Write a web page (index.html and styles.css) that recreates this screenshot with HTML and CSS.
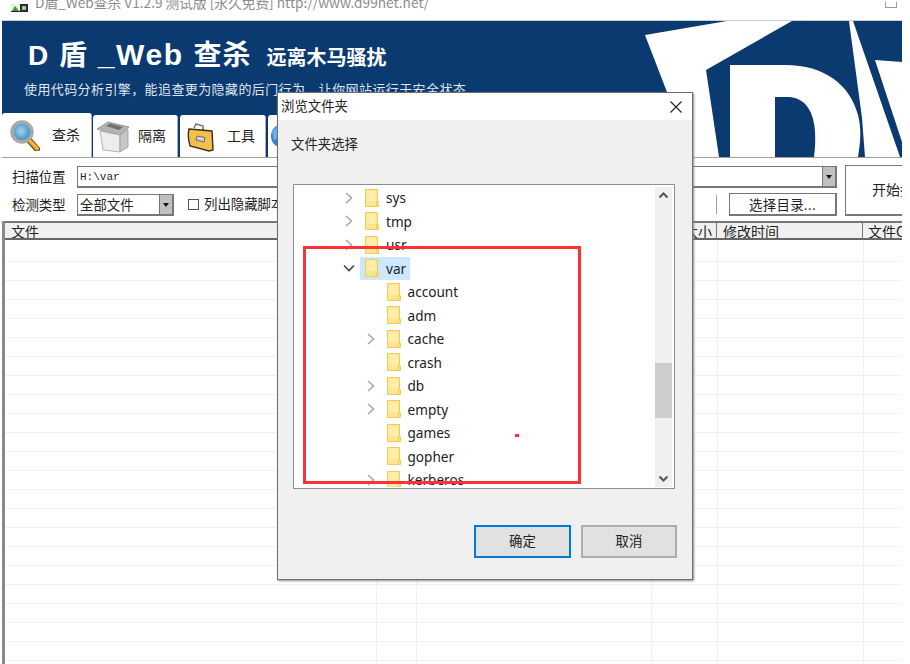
FILE: index.html
```html
<!DOCTYPE html>
<html lang="zh-CN">
<head>
<meta charset="utf-8">
<title>D盾_Web查杀</title>
<link rel="stylesheet" href="styles.css">
</head>
<body>
<svg class="defs" width="0" height="0" aria-hidden="true">
  <symbol id="folder" viewBox="0 0 14 18">
    <path d="M.5 .5H12.5V13H13.5V17.5H.5Z" fill="#fde68f" stroke="#f1cb55"/>
    <path d="M1.5 1.5H11.5V12H1.5Z" fill="#ffeda8"/>
    <path d="M11.5 17V12.5H13.2" fill="none" stroke="#f1cb55"/>
  </symbol>
  <symbol id="chev-right" viewBox="0 0 16 16">
    <path d="M5 3L10.5 8L5 13" fill="none" stroke="#a8a8a8" stroke-width="1.6"/>
  </symbol>
  <symbol id="chev-down" viewBox="0 0 16 16">
    <path d="M3 5.5L8 10.5L13 5.5" fill="none" stroke="#444" stroke-width="1.6"/>
  </symbol>
</svg>

<div class="app">
  <header class="titlebar">
    <svg class="app-icon" width="17" height="8" viewBox="0 0 17 8"><rect width="9" height="8" fill="#e8f2e0"/><path d="M1 7L4 2L8 7Z" fill="#3d9a3a"/><rect x="0" y="7" width="9" height="1" fill="#222"/><rect x="9" width="8" height="8" fill="#2a2a2a"/><rect x="11" y="2" width="4" height="4" fill="#a9c0ab"/></svg>
    <span class="title-text">D盾_Web查杀 V1.2.9 测试版 [永久免费] http://www.d99net.net/</span>
    <span class="win-max"></span>
  </header>

  <section class="banner">
    <svg class="banner-logo" width="900" height="136" viewBox="2 21 900 136">
      <path d="M645 35L727 21H792L706 70L719 157H692Z" fill="#fff"/>
      <path d="M730 65H785C825 65 850 85 858 115C862 130 860 145 858 157H730ZM775 97V157H814C816 140 816 125 811 113C806 102 798 97 788 97Z" fill="#fff" fill-rule="evenodd"/>
      <path d="M849 21H853L900 157H865L862 118Z" fill="#fff"/>
      <path d="M875 60L902 62V142Z" fill="#fff"/>
    </svg>
    <div class="brand">
      <h1 class="brand-name">D 盾 <span class="brand-web">_Web</span> 查杀</h1>
      <span class="brand-slogan">远离木马骚扰</span>
    </div>
    <p class="brand-sub">使用代码分析引擎，能追查更为隐藏的后门行为，让你网站运行于安全状态</p>
    <nav class="tabs">
      <div class="tab tab-scan active">
        <svg class="tab-icon" width="31" height="31" viewBox="0 0 31 31">
          <defs><radialGradient id="lens" cx=".45" cy=".45" r=".6"><stop offset="0" stop-color="#9fd6ee"/><stop offset="1" stop-color="#2f7fb8"/></radialGradient></defs>
          <path d="M18 19L27 29" stroke="#6b4a12" stroke-width="6" stroke-linecap="round"/>
          <path d="M19 20L27 28.5" stroke="#f0b23c" stroke-width="4" stroke-linecap="round"/>
          <circle cx="12" cy="12" r="10" fill="url(#lens)" stroke="#a9a9a9" stroke-width="3.5"/>
        </svg>
        <span>查杀</span>
      </div>
      <div class="tab tab-quarantine">
        <svg class="tab-icon" width="34" height="33" viewBox="0 0 34 33">
          <path d="M1 9L12 2L33 7L24 15Z" fill="#b4b4b4" stroke="#8c8c8c" stroke-width=".8"/>
          <path d="M10 6L14 3.5L27 7L23 10Z" fill="#6f6f6f"/>
          <path d="M4 11L24 15V32L7 30Z" fill="#ededed" stroke="#a5a5a5" stroke-width=".8"/>
          <path d="M24 15L32 9.5V27L24 32Z" fill="#c6c6c6" stroke="#9a9a9a" stroke-width=".8"/>
        </svg>
        <span>隔离</span>
      </div>
      <div class="tab tab-tools">
        <svg class="tab-icon" width="27" height="29" viewBox="0 0 27 29">
          <path d="M7 5L9 1L16 3L16 7" fill="none" stroke="#777" stroke-width="1.6"/>
          <path d="M2 6L25 8L26 27L22 28L3 23C1 16 1 10 2 6Z" fill="#f4bf4e" stroke="#3f3110" stroke-width="1.4"/>
          <path d="M10 13L18 14.5L17 19L9 17Z" fill="#d6d6d6" stroke="#6a6a6a"/>
        </svg>
        <span>工具</span>
      </div>
      <div class="tab tab-web">
        <svg class="tab-icon" width="26" height="26" viewBox="0 0 26 26">
          <circle cx="13" cy="13" r="12" fill="#2f7fd0"/>
          <path d="M2 8L8 3L10 12L4 18Z" fill="#6fb0ea"/>
        </svg>
        <span>WebShell</span>
      </div>
    </nav>
  </section>

  <form class="scan-form">
    <label class="field-label">扫描位置</label>
    <div class="combo combo-path">
      <span class="combo-value mono">H:\var</span>
      <span class="combo-btn"></span>
    </div>
    <button type="button" class="btn-start">开始扫描</button>
    <label class="field-label">检测类型</label>
    <div class="options">
      <div class="combo combo-type">
        <span class="combo-value">全部文件</span>
        <span class="combo-btn"></span>
      </div>
      <span class="check"></span>
      <span class="check-label">列出隐藏脚本</span>
      <span class="divider"></span>
      <button type="button" class="btn-dir">选择目录...</button>
    </div>
  </form>

  <section class="results">
    <div class="results-head">
      <div class="hcell col-file">文件</div>
      <div class="hcell col-level">级别</div>
      <div class="hcell col-note">说明</div>
      <div class="hcell col-size">文件大小</div>
      <div class="hcell col-time">修改时间</div>
      <div class="hcell col-crc">文件CRC</div>
    </div>
    <div class="results-body">
      <div class="row first"></div><div class="row"></div><div class="row"></div><div class="row"></div><div class="row"></div>
      <div class="row"></div><div class="row"></div><div class="row"></div><div class="row"></div><div class="row"></div>
      <div class="row"></div><div class="row"></div><div class="row"></div><div class="row"></div><div class="row"></div>
      <div class="row"></div><div class="row"></div><div class="row"></div><div class="row"></div><div class="row"></div>
      <div class="row"></div><div class="row"></div>
    </div>
  </section>
</div>

<div class="dialog">
  <div class="dialog-title">
    <span class="dialog-caption">浏览文件夹</span>
    <svg class="dialog-close" width="12" height="12" viewBox="0 0 12 12"><path d="M.5 .5L11.5 11.5M11.5 .5L.5 11.5" stroke="#222" stroke-width="1.1"/></svg>
  </div>
  <div class="dialog-body">
    <p class="dialog-label">文件夹选择</p>
    <div class="tree-box">
      <ul class="tree">
        <li class="node lv1"><svg class="chev"><use href="#chev-right"/></svg><span class="item"><svg class="folder"><use href="#folder"/></svg>sys</span></li>
        <li class="node lv1"><svg class="chev"><use href="#chev-right"/></svg><span class="item"><svg class="folder"><use href="#folder"/></svg>tmp</span></li>
        <li class="node lv1"><svg class="chev"><use href="#chev-right"/></svg><span class="item"><svg class="folder"><use href="#folder"/></svg>usr</span></li>
        <li class="node lv1"><svg class="chev"><use href="#chev-down"/></svg><span class="item selected"><svg class="folder"><use href="#folder"/></svg>var</span></li>
        <li class="node lv2"><span class="chev"></span><span class="item"><svg class="folder"><use href="#folder"/></svg>account</span></li>
        <li class="node lv2"><span class="chev"></span><span class="item"><svg class="folder"><use href="#folder"/></svg>adm</span></li>
        <li class="node lv2"><svg class="chev"><use href="#chev-right"/></svg><span class="item"><svg class="folder"><use href="#folder"/></svg>cache</span></li>
        <li class="node lv2"><span class="chev"></span><span class="item"><svg class="folder"><use href="#folder"/></svg>crash</span></li>
        <li class="node lv2"><svg class="chev"><use href="#chev-right"/></svg><span class="item"><svg class="folder"><use href="#folder"/></svg>db</span></li>
        <li class="node lv2"><svg class="chev"><use href="#chev-right"/></svg><span class="item"><svg class="folder"><use href="#folder"/></svg>empty</span></li>
        <li class="node lv2"><span class="chev"></span><span class="item"><svg class="folder"><use href="#folder"/></svg>games</span></li>
        <li class="node lv2"><span class="chev"></span><span class="item"><svg class="folder"><use href="#folder"/></svg>gopher</span></li>
        <li class="node lv2"><svg class="chev"><use href="#chev-right"/></svg><span class="item"><svg class="folder"><use href="#folder"/></svg>kerberos</span></li>
      </ul>
      <div class="scrollbar">
        <svg class="sb-arrow" width="17" height="17" viewBox="0 0 17 17"><path d="M4.5 10.5L8.5 6.5L12.5 10.5" fill="none" stroke="#555" stroke-width="2"/></svg>
        <div class="sb-thumb"></div>
        <svg class="sb-arrow sb-down" width="17" height="17" viewBox="0 0 17 17"><path d="M4.5 6.5L8.5 10.5L12.5 6.5" fill="none" stroke="#555" stroke-width="2"/></svg>
      </div>
    </div>
    <div class="dialog-actions">
      <button type="button" class="dlg-btn primary">确定</button>
      <button type="button" class="dlg-btn">取消</button>
    </div>
  </div>
</div>

<div class="mark-box"></div>
<div class="mark-dot"></div>
</body>
</html>
```

FILE: styles.css
```css
* { box-sizing: border-box; }

html, body {
  margin: 0;
  padding: 0;
}

body {
  position: relative;
  width: 910px;
  height: 664px;
  overflow: hidden;
  background: #fff;
  color: #222;
  font-family: "Noto Sans CJK SC", "Liberation Sans", sans-serif;
  font-size: 14px;
}

.defs { position: absolute; }

.app {
  width: 900px;
  height: 664px;
  margin-left: 2px;
  overflow: hidden;
}

/* Window title */
.titlebar {
  position: relative;
  display: flex;
  align-items: flex-start;
  height: 21px;
  padding-left: 9px;
  overflow: hidden;
  border-bottom: 1px solid #c8ced6;
}

.app-icon { margin-top: 4px; }

.title-text {
  margin: -8px 0 0 7px;
  color: #8d8d8d;
  font-size: 13.7px;
  line-height: 20px;
  white-space: nowrap;
}

.win-max {
  position: absolute;
  top: 2px;
  right: 5px;
  width: 12px;
  height: 6px;
  border: 1px solid #9a9a9a;
  border-top: 0;
}

/* Banner */
.banner {
  position: relative;
  display: flex;
  flex-direction: column;
  height: 136px;
  padding-top: 17px;
  background: #0a3a6f;
  color: #fff;
}

.banner-logo {
  position: absolute;
  top: 0;
  left: 0;
}

.brand {
  position: relative;
  display: flex;
  align-items: baseline;
  gap: 15px;
  padding-left: 26px;
}

.brand-name {
  margin: 0;
  font-family: "Liberation Sans", "Noto Sans CJK SC", sans-serif;
  font-size: 28px;
  font-weight: 700;
  line-height: 34px;
  letter-spacing: 1px;
  word-spacing: 1px;
}

.brand-web {
  font-size: 30px;
  letter-spacing: 1.6px;
}

.brand-slogan {
  font-size: 20px;
  font-weight: 700;
}

.brand-sub {
  position: relative;
  margin: 7px 0 0;
  padding-left: 22px;
  color: #dfe7ef;
  font-size: 13px;
  line-height: 18px;
  letter-spacing: .4px;
  white-space: nowrap;
}

/* Tabs */
.tabs {
  position: relative;
  display: flex;
  align-items: flex-end;
  gap: 2px;
  margin-top: auto;
}

.tab {
  display: flex;
  align-items: center;
  height: 42px;
  background: #fff;
  border-right: 1px solid #a8b4c0;
  border-radius: 3px 3px 0 0;
  color: #222;
  white-space: nowrap;
}

.tab span { font-size: 14px; }

.tab-icon { flex: none; }

.tab.active {
  position: relative;
  z-index: 1;
  width: 90px;
  height: 44px;
  margin-right: -1px;
  padding-left: 8px;
}

.tab-scan span { margin: -2px 0 0 11px; }

.tab-quarantine {
  width: 85px;
  padding-left: 3px;
}

.tab-quarantine span { margin: -2px 0 0 8px; }

.tab-tools {
  width: 86px;
  padding-left: 7px;
}

.tab-tools .tab-icon { margin-top: 2px; }

.tab-tools span { margin: -2px 0 0 13px; }

.tab-web {
  width: 120px;
  padding-left: 2px;
}

.tab-web span { margin-left: 8px; }

/* Form */
.scan-form {
  display: grid;
  grid-template-columns: 65px 760px auto;
  grid-template-rows: 22px 22px;
  row-gap: 6px;
  align-items: center;
  height: 64px;
  padding: 8px 0 0 10px;
  border-top: 1px solid #a0a0a0;
}

.field-label {
  margin-top: -3px;
  font-size: 13.4px;
  line-height: 20px;
}

.combo {
  display: flex;
  align-items: center;
  height: 22px;
  border: 1px solid #777;
  border-width: 1px 2px 2px 1px;
  background: #fff;
}

.combo-path { width: 760px; }

.combo-type {
  flex: none;
  width: 97px;
}

.combo-value {
  flex: 1;
  padding: 0 0 2px 2px;
  font-size: 13.4px;
  line-height: 16px;
}

.combo-value.mono {
  padding-bottom: 0;
  font-family: "Liberation Mono", monospace;
  font-size: 11px;
}

.combo-btn {
  position: relative;
  flex: none;
  width: 13px;
  height: 100%;
  border-left: 1px solid #777;
  background: #c0c0c0;
}

.combo-btn::after {
  content: "";
  position: absolute;
  top: 8px;
  left: 3px;
  border: 3.5px solid transparent;
  border-top: 4px solid #111;
  border-bottom: 0;
}

.btn-start {
  grid-column: 3;
  grid-row: 1 / span 2;
  align-self: start;
  width: 110px;
  height: 51px;
  margin: -1px 0 0 8px;
  padding: 0 0 3px 1px;
  border: 1px solid #777;
  border-width: 1px 2px 2px 1px;
  background: #fff;
  color: #222;
  font: inherit;
}

.options {
  display: flex;
  align-items: center;
}

.check {
  flex: none;
  width: 11px;
  height: 11px;
  margin: -2px 0 0 14px;
  border: 1px solid #555;
  background: #fff;
}

.check-label {
  margin: -4px 0 0 5px;
  font-size: 13.4px;
}

.divider {
  width: 1px;
  height: 19px;
  margin: -2px 0 0 auto;
  background: #a0a0a0;
}

.btn-dir {
  flex: none;
  width: 108px;
  height: 23px;
  margin: -2px 0 0 12px;
  padding: 0 0 3px;
  border: 1px solid #777;
  border-width: 1px 2px 2px 1px;
  background: #fff;
  color: #222;
  font: inherit;
  font-size: 13.4px;
  letter-spacing: .3px;
}

/* Results table */
.results {
  height: 443px;
  border-left: 3px solid #8a8a8a;
}

.results-head {
  display: grid;
  grid-template-columns: 371px 40px 235px 66px 146px 1fr;
  height: 19px;
  border-top: 2px solid #777;
  border-bottom: 2px solid #666;
  background: #f0f0f0;
}

.hcell {
  padding-left: 5px;
  overflow: hidden;
  border-right: 1px solid #777;
  font-size: 14px;
  line-height: 17px;
  white-space: nowrap;
}

.hcell.col-crc { border-right: 0; }

.col-file { padding-left: 6px; }

.col-time { padding-left: 6px; }

.results-body {
  height: 424px;
  background:
    linear-gradient(#f0f0f0, #f0f0f0) 371px 0 / 1px 100% no-repeat,
    linear-gradient(#f0f0f0, #f0f0f0) 411px 0 / 1px 100% no-repeat,
    linear-gradient(#f0f0f0, #f0f0f0) 646px 0 / 1px 100% no-repeat,
    linear-gradient(#f0f0f0, #f0f0f0) 712px 0 / 1px 100% no-repeat,
    linear-gradient(#f0f0f0, #f0f0f0) 858px 0 / 1px 100% no-repeat;
}

.row {
  height: 19px;
  border-bottom: 1px solid #f0f0f0;
}

.row.first { height: 22px; }

/* Dialog */
.dialog {
  position: absolute;
  top: 92px;
  left: 277px;
  display: flex;
  flex-direction: column;
  width: 416px;
  height: 488px;
  border: 1px solid #6e6e6e;
  box-shadow: 1px 1px 2px #8a8a8a;
  background: #f0f0f0;
}

.dialog-title {
  display: flex;
  align-items: center;
  justify-content: space-between;
  flex: none;
  height: 27px;
  padding: 0 10px 0 3px;
  background: #fff;
}

.dialog-caption {
  margin-top: -3px;
  font-size: 13.4px;
}

.dialog-close { flex: none; }

.dialog-body {
  flex: 1;
  padding: 13px 15px 0 15px;
}

.dialog-label {
  margin: 0 0 0 -2px;
  font-size: 13.4px;
  line-height: 20px;
}

.tree-box {
  display: flex;
  width: 382px;
  height: 305px;
  margin: 31px 0 0 0;
  padding: 1px 2px 1px 0;
  border: 1px solid #8a8f96;
  background: #fff;
}

.tree {
  flex: 1;
  min-width: 0;
  margin: 0;
  padding: 0;
  overflow: hidden;
  list-style: none;
  font-family: "Noto Sans", "Open Sans", sans-serif;
  font-size: 13.6px;
  color: #222;
}

.node {
  display: flex;
  align-items: center;
  height: 23.5px;
}

.lv1 { padding-left: 47px; }

.lv2 { padding-left: 68.5px; }

.chev {
  flex: none;
  width: 16px;
  height: 16px;
  margin-right: 3px;
}

.item {
  display: flex;
  align-items: center;
  height: 23px;
  padding: 0 4px 0 5px;
}

.item.selected { background: #cce8ff; }

.folder {
  flex: none;
  width: 14px;
  height: 18px;
  margin-right: 7px;
}

.scrollbar {
  display: flex;
  flex-direction: column;
  flex: none;
  width: 17px;
  margin: 1px 0 0;
  background: #f0f0f0;
}

.sb-arrow { flex: none; }

.sb-thumb {
  flex: none;
  height: 55px;
  margin-top: 159px;
  background: #cdcdcd;
}

.sb-down { margin-top: auto; }

.dialog-actions {
  display: flex;
  justify-content: flex-end;
  gap: 10px;
  margin-top: 36px;
}

.dlg-btn {
  width: 96px;
  height: 33px;
  padding: 0 0 3px;
  border: 2px solid #adadad;
  background: #e1e1e1;
  color: #222;
  font: inherit;
  font-size: 13.4px;
}

.dlg-btn.primary {
  width: 97px;
  border-color: #0078d7;
}

/* Red annotation drawn over the screenshot */
.mark-box {
  position: absolute;
  top: 246px;
  left: 303px;
  width: 278px;
  height: 238px;
  border: 3px solid #fb3338;
}

.mark-dot {
  position: absolute;
  top: 434px;
  left: 515px;
  width: 4px;
  height: 3px;
  background: #fb3338;
}
```
